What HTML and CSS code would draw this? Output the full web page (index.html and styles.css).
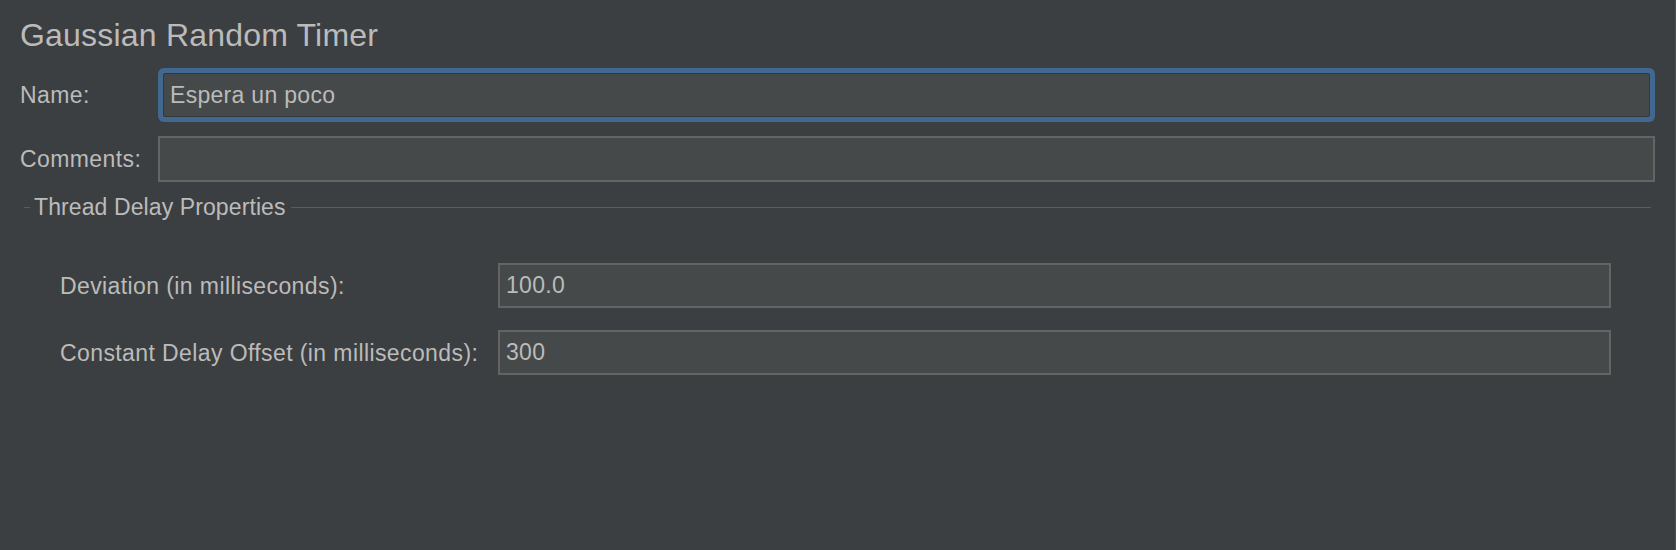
FILE: index.html
```html
<!DOCTYPE html>
<html>
<head>
<meta charset="utf-8">
<title>Gaussian Random Timer</title>
<link rel="stylesheet" href="styles.css">
</head>
<body>
<div class="page">
  <h1 class="title">Gaussian Random Timer</h1>
  <div class="top-form">
    <label class="label">Name:</label>
    <div class="focus-ring"><div class="field field-focused">Espera un poco</div></div>
    <label class="label">Comments:</label>
    <div class="field field-comments"></div>
  </div>
  <div class="group">
    <div class="legend">
      <span class="legend-line legend-line-start"></span>
      <span class="legend-text">Thread Delay Properties</span>
      <span class="legend-line legend-line-end"></span>
    </div>
    <div class="props">
      <label class="label">Deviation (in milliseconds):</label>
      <div class="field field-prop">100.0</div>
      <label class="label">Constant Delay Offset (in milliseconds):</label>
      <div class="field field-prop">300</div>
    </div>
  </div>
</div>
</body>
</html>
```

FILE: styles.css
```css
html, body {
  margin: 0;
  padding: 0;
}

body {
  background: #3c3f41;
  font-family: "Liberation Sans", Arial, Helvetica, sans-serif;
  color: #bbbbbb;
}

.page {
  height: 550px;
  box-sizing: border-box;
  border-right: 1px solid #4e5153;
  overflow: hidden;
}

.title {
  margin: 0;
  padding: 17px 0 0 20px;
  font-size: 32px;
  font-weight: normal;
  line-height: 36px;
  letter-spacing: 0.2px;
  color: #bbbbbb;
}

.label {
  font-size: 23px;
  line-height: 26px;
  letter-spacing: 0.4px;
  white-space: nowrap;
}

.top-form {
  display: grid;
  grid-template-columns: 138px 1fr;
  row-gap: 14px;
  align-items: center;
  margin-top: 15px;
  padding: 0 20px 0 20px;
}

.field {
  box-sizing: border-box;
  background: #45494a;
  border: 2px solid #646464;
  font-size: 23px;
  letter-spacing: 0.3px;
  color: #bbbbbb;
  display: flex;
  align-items: center;
  padding: 0 6px;
  white-space: nowrap;
}

.focus-ring {
  padding: 5px;
  background: #41688f;
  border-radius: 6px;
}

.field-focused {
  height: 44px;
  border: 1px solid #33383c;
  border-radius: 2px;
  padding: 0 6px;
}

.field-comments {
  height: 46px;
}

.group {
  margin: 13px 24px 0 24px;
}

.legend {
  display: flex;
  align-items: center;
  height: 25px;
}

.legend-line {
  height: 1px;
  background: #5a5d5f;
}

.legend-line-start {
  width: 6px;
}

.legend-line-end {
  flex: 1;
}

.legend-text {
  font-size: 23px;
  line-height: 25px;
  letter-spacing: 0.1px;
  padding: 0 5px 0 4px;
  white-space: nowrap;
}

.props {
  display: grid;
  grid-template-columns: 422px 1fr;
  column-gap: 16px;
  row-gap: 22px;
  align-items: center;
  margin-top: 43px;
  padding: 0 40px 0 36px;
}

.field-prop {
  height: 45px;
}
```
